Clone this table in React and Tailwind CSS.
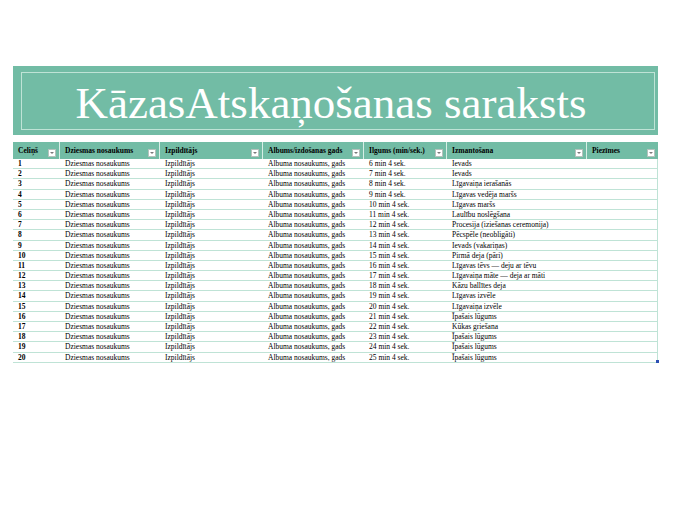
import React from 'react';

const uses = [
  'Ievads',
  'Ievads',
  'Līgavaiņa ierašanās',
  'Līgavas vedēja maršs',
  'Līgavas maršs',
  'Laulību noslēgšana',
  'Procesija (iziešanas ceremonija)',
  'Pēcspēle (neobligāti)',
  'Ievads (vakariņas)',
  'Pirmā deja (pāri)',
  'Līgavas tēvs — deju ar tēvu',
  'Līgavaiņa māte — deja ar māti',
  'Kāzu ballītes deja',
  'Līgavas izvēle',
  'Līgavaiņa izvēle',
  'Īpašais lūgums',
  'Kūkas griešana',
  'Īpašais lūgums',
  'Īpašais lūgums',
  'Īpašais lūgums',
];

const cols = [
  { title: 'Celiņš', w: 'w-[46px]' },
  { title: 'Dziesmas nosaukums', w: 'w-[100px]' },
  { title: 'Izpildītājs', w: 'w-[103px]' },
  { title: 'Albums/izdošanas gads', w: 'w-[101px]' },
  { title: 'Ilgums (min/sek.)', w: 'w-[83px]' },
  { title: 'Izmantošana', w: 'w-[140px]' },
  { title: 'Piezīmes', w: 'w-[72px]' },
];

function FilterButton() {
  return (
    <span className="absolute right-[3px] bottom-[2px] flex h-[8px] w-[8px] items-center justify-center border border-[#b5c2bd] bg-white">
      <svg width="4" height="2" viewBox="0 0 4 2">
        <path d="M0 0 L4 0 L2 2 Z" fill="#7a7a7a" />
      </svg>
    </span>
  );
}

export default function App() {
  const rows = uses.map((u, i) => [
    String(i + 1),
    'Dziesmas nosaukums',
    'Izpildītājs',
    'Albuma nosaukums, gads',
    `${i + 6} min 4 sek.`,
    u,
    '',
  ]);

  return (
    <div
      className="h-[520px] w-[675px] bg-white pt-[66px] pl-[13px]"
      style={{ fontFamily: '"Liberation Serif", "Times New Roman", serif' }}
    >
      <div className="h-[69px] w-[645px] bg-[#72bca5] pt-[6px] pr-[3px] pb-[5px] pl-[8px]">
        <div className="flex h-full items-center justify-center border border-[#bfe3d6] pr-[14px] pt-[4px]">
          <h1 className="text-[45px] leading-none font-normal text-white">KāzasAtskaņošanas saraksts</h1>
        </div>
      </div>

      <div className="mt-[7px] w-[645px] text-[7.5px] text-black">
        <div className="flex h-[17px] bg-[#72bca5]">
          {cols.map((c, i) => (
            <div
              key={c.title}
              className={`relative ${c.w} ${i > 0 ? 'border-l border-[#d7eee6]' : ''} pl-[5px] pt-[5px] font-bold leading-none`}
            >
              {c.title}
              <FilterButton />
            </div>
          ))}
        </div>
        <div className="border-r border-[#bfe3d6]">
          {rows.map((r, ri) => (
            <div key={ri} className="flex h-[10.2px] border-b-[1.5px] border-[#bfe3d6] leading-[9px]">
              {r.map((v, ci) => (
                <div
                  key={ci}
                  className={`${cols[ci].w} shrink-0 overflow-hidden whitespace-nowrap pl-[5px] ${ci > 0 ? 'border-l border-transparent' : 'font-bold'}`}
                >
                  {v}
                </div>
              ))}
            </div>
          ))}
        </div>
        <div className="relative h-0">
          <span className="absolute right-[-1px] top-[-3px] h-[3px] w-[3px] bg-[#2b4fb3]" />
        </div>
      </div>
    </div>
  );
}
